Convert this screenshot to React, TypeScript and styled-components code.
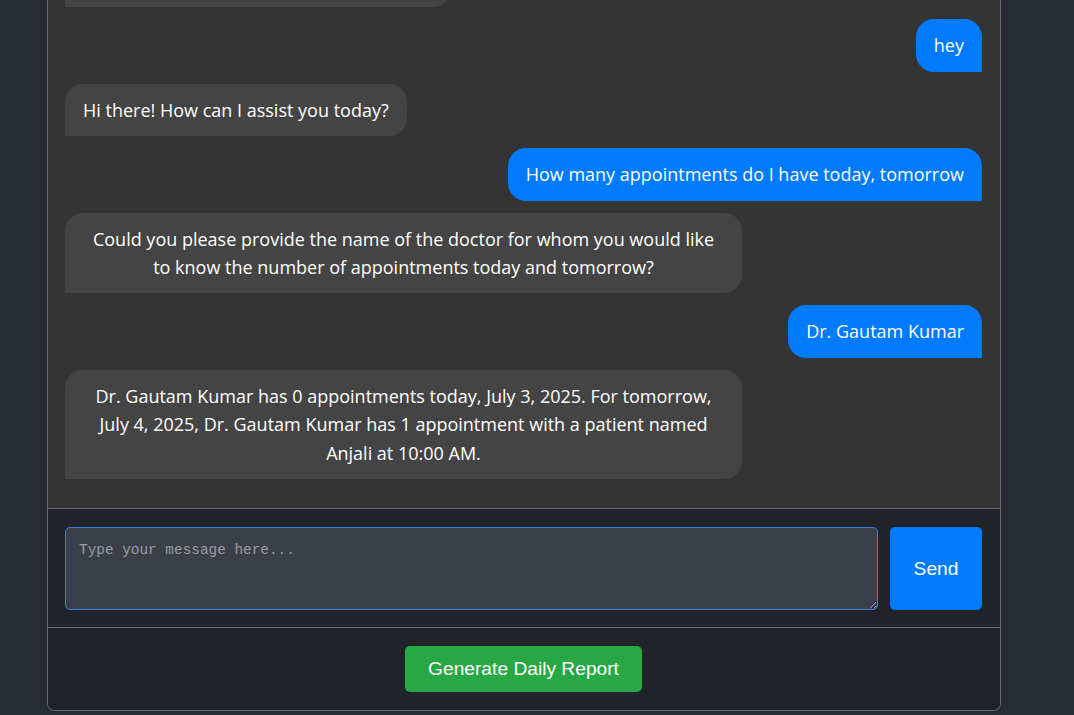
import React from "react";
import styled, { createGlobalStyle } from "styled-components";

const GlobalStyle = createGlobalStyle`
  html, body {
    margin: 0;
    padding: 0;
    background: #282c34;
    height: 100%;
  }
  #root { height: 100%; }
  * { box-sizing: border-box; }
`;

const Page = styled.div`
  height: 100vh;
  padding: 0 73px 4px 47px;
  display: flex;
  flex-direction: column;
`;

const Panel = styled.div`
  flex: 1;
  min-height: 0;
  display: flex;
  flex-direction: column;
  border: 1px solid #6b6b6b;
  border-top: none;
  border-radius: 0 0 8px 8px;
  overflow: hidden;
  background: #20232a;
`;

const Messages = styled.div`
  flex: 1;
  min-height: 0;
  overflow: hidden;
  background: #343434;
  display: flex;
  flex-direction: column;
  justify-content: flex-end;
  gap: 12px;
  padding: 0 18px 29px 17px;
`;

const Bubble = styled.div<{ $user?: boolean }>`
  flex-shrink: 0;
  align-self: ${(p) => (p.$user ? "flex-end" : "flex-start")};
  max-width: 677px;
  padding: 12px 18px;
  border-radius: ${(p) => (p.$user ? "18px 18px 0 18px" : "18px 18px 18px 0")};
  background: ${(p) => (p.$user ? "#007bff" : "#444444")};
  color: #ffffff;
  font-family: "Open Sans", "Noto Sans", sans-serif;
  font-size: 18px;
  line-height: 28.4px;
  text-align: center;
`;

const InputBar = styled.div`
  display: flex;
  gap: 12px;
  padding: 18px 18px 17px 17px;
  border-top: 1px solid #6b6b6b;
  background: #20232a;
`;

const TextBox = styled.textarea`
  flex: 1;
  height: 83px;
  padding: 14px 13px 12px;
  border: 1px solid #3a80e0;
  border-radius: 5px;
  background: #3a3f48;
  color: #ffffff;
  font-family: "Liberation Mono", "DejaVu Sans Mono", monospace;
  font-size: 14.4px;
  outline: none;
  &::placeholder {
    color: #9a9ca1;
  }
`;

const SendButton = styled.button`
  width: 92px;
  padding: 0;
  border: none;
  border-radius: 5px;
  background: #007bff;
  color: #ffffff;
  font-family: "Liberation Sans", Arial, sans-serif;
  font-size: 19.2px;
  cursor: pointer;
`;

const Footer = styled.div`
  display: flex;
  justify-content: center;
  padding: 18px 18px 18px 17px;
  border-top: 1px solid #6b6b6b;
  background: #20232a;
`;

const ReportButton = styled.button`
  height: 46px;
  padding: 0 23px;
  border: none;
  border-radius: 5px;
  background: #28a745;
  color: #ffffff;
  font-family: "Liberation Sans", Arial, sans-serif;
  font-size: 19.2px;
  cursor: pointer;
`;

const messages: { user: boolean; text: string }[] = [
  { user: false, text: "Hello! I am your AI appointment assistant." },
  { user: true, text: "hey" },
  { user: false, text: "Hi there! How can I assist you today?" },
  { user: true, text: "How many appointments do I have today, tomorrow" },
  {
    user: false,
    text: "Could you please provide the name of the doctor for whom you would like to know the number of appointments today and tomorrow?",
  },
  { user: true, text: "Dr. Gautam Kumar" },
  {
    user: false,
    text: "Dr. Gautam Kumar has 0 appointments today, July 3, 2025. For tomorrow, July 4, 2025, Dr. Gautam Kumar has 1 appointment with a patient named Anjali at 10:00 AM.",
  },
];

export default function App() {
  return (
    <>
      <GlobalStyle />
      <Page>
        <Panel>
          <Messages>
            {messages.map((m, i) => (
              <Bubble key={i} $user={m.user}>
                {m.text}
              </Bubble>
            ))}
          </Messages>
          <InputBar>
            <TextBox placeholder="Type your message here..." />
            <SendButton>Send</SendButton>
          </InputBar>
          <Footer>
            <ReportButton>Generate Daily Report</ReportButton>
          </Footer>
        </Panel>
      </Page>
    </>
  );
}
